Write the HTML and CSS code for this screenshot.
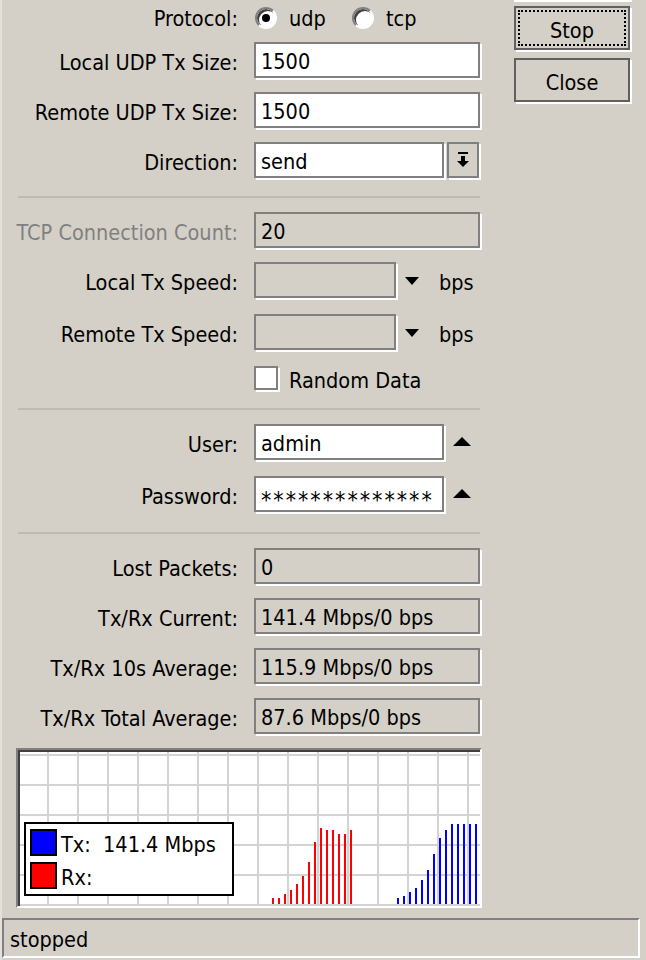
FILE: index.html
```html
<!DOCTYPE html>
<html lang="en">
<head>
  <meta charset="UTF-8" />
  <title>Bandwidth Test</title>
  <link rel="stylesheet" href="styles.css">
</head>
<body>
  <div class="window">
    <div class="main">
      <div class="form">
        <div class="row row-top">
          <div class="label">Protocol:</div>
          <div class="control">
            <span class="radio-opt"><span class="radio checked"></span><span class="opt-text">udp</span></span>
            <span class="radio-opt"><span class="radio"></span><span class="opt-text">tcp</span></span>
          </div>
        </div>
        <div class="row mt-6">
          <div class="label">Local UDP Tx Size:</div>
          <div class="control"><div class="box">1500</div></div>
        </div>
        <div class="row mt-14">
          <div class="label">Remote UDP Tx Size:</div>
          <div class="control"><div class="box">1500</div></div>
        </div>
        <div class="row mt-14">
          <div class="label">Direction:</div>
          <div class="control">
            <div class="box short">send</div>
            <div class="drop-btn">
              <svg width="14" height="16" viewBox="0 0 14 16"><rect x="2" y="0" width="10" height="2" fill="#000"/><rect x="5" y="4" width="4" height="5" fill="#000"/><polygon points="1,9 13,9 7,15" fill="#000"/></svg>
            </div>
          </div>
        </div>

        <div class="sep mt-18"></div>

        <div class="row mt-14">
          <div class="label disabled">TCP Connection Count:</div>
          <div class="control"><div class="box off">20</div></div>
        </div>
        <div class="row mt-14">
          <div class="label">Local Tx Speed:</div>
          <div class="control">
            <div class="box speed off"></div>
            <svg class="tri-down" width="14" height="8" viewBox="0 0 14 8"><polygon points="0,0 14,0 7,8" fill="#000"/></svg>
            <span class="unit">bps</span>
          </div>
        </div>
        <div class="row mt-16">
          <div class="label">Remote Tx Speed:</div>
          <div class="control">
            <div class="box speed off"></div>
            <svg class="tri-down" width="14" height="8" viewBox="0 0 14 8"><polygon points="0,0 14,0 7,8" fill="#000"/></svg>
            <span class="unit">bps</span>
          </div>
        </div>
        <div class="row mt-10">
          <div class="label"></div>
          <div class="control">
            <span class="check"></span>
            <span class="check-text">Random Data</span>
          </div>
        </div>

        <div class="sep mt-12"></div>

        <div class="row mt-14">
          <div class="label">User:</div>
          <div class="control">
            <div class="box short">admin</div>
            <svg class="tri-up" width="18" height="9" viewBox="0 0 18 9"><polygon points="0,9 18,9 9,0" fill="#000"/></svg>
          </div>
        </div>
        <div class="row mt-16">
          <div class="label">Password:</div>
          <div class="control">
            <div class="box short"><span class="stars">**************</span></div>
            <svg class="tri-up" width="18" height="9" viewBox="0 0 18 9"><polygon points="0,9 18,9 9,0" fill="#000"/></svg>
          </div>
        </div>

        <div class="sep mt-20"></div>

        <div class="row mt-14">
          <div class="label">Lost Packets:</div>
          <div class="control"><div class="box off">0</div></div>
        </div>
        <div class="row mt-14">
          <div class="label">Tx/Rx Current:</div>
          <div class="control"><div class="box off">141.4 Mbps/0 bps</div></div>
        </div>
        <div class="row mt-14">
          <div class="label">Tx/Rx 10s Average:</div>
          <div class="control"><div class="box off">115.9 Mbps/0 bps</div></div>
        </div>
        <div class="row mt-14">
          <div class="label">Tx/Rx Total Average:</div>
          <div class="control"><div class="box off">87.6 Mbps/0 bps</div></div>
        </div>
      </div>

      <div class="buttons">
        <div class="btn-edge"></div>
        <button class="btn btn-focus">Stop</button>
        <button class="btn">Close</button>
      </div>
    </div>

    <div class="graph">
      <svg width="462" height="156" viewBox="0 0 462 156">
        <rect width="462" height="156" fill="#fff"/>
        <g fill="#d3d3d3">
          <rect x="29" y="0" width="2" height="156"/><rect x="59" y="0" width="2" height="156"/>
          <rect x="89" y="0" width="2" height="156"/><rect x="119" y="0" width="2" height="156"/>
          <rect x="149" y="0" width="2" height="156"/><rect x="179" y="0" width="2" height="156"/>
          <rect x="209" y="0" width="2" height="156"/><rect x="239" y="0" width="2" height="156"/>
          <rect x="269" y="0" width="2" height="156"/><rect x="299" y="0" width="2" height="156"/>
          <rect x="329" y="0" width="2" height="156"/><rect x="359" y="0" width="2" height="156"/>
          <rect x="389" y="0" width="2" height="156"/><rect x="419" y="0" width="2" height="156"/>
          <rect x="449" y="0" width="2" height="156"/>
          <rect x="0" y="4" width="462" height="2"/><rect x="0" y="34" width="462" height="2"/>
          <rect x="0" y="64" width="462" height="2"/><rect x="0" y="94" width="462" height="2"/>
          <rect x="0" y="124" width="462" height="2"/><rect x="0" y="154" width="462" height="2"/>
        </g>
        <!-- rx -->
        <g fill="#ff0000">
          <rect x="254" y="148" width="2" height="6"/><rect x="260" y="148" width="2" height="6"/>
          <rect x="266" y="144" width="2" height="10"/><rect x="272" y="140" width="2" height="14"/>
          <rect x="278" y="134" width="2" height="20"/><rect x="284" y="126" width="2" height="28"/>
          <rect x="290" y="112" width="2" height="42"/><rect x="296" y="92" width="2" height="62"/>
          <rect x="302" y="78" width="2" height="76"/><rect x="308" y="80" width="2" height="74"/>
          <rect x="314" y="80" width="2" height="74"/><rect x="320" y="84" width="2" height="70"/>
          <rect x="326" y="84" width="2" height="70"/><rect x="332" y="80" width="2" height="74"/>
        </g>
        <!-- tx -->
        <g fill="#0000ff">
          <rect x="379" y="148" width="2" height="6"/><rect x="385" y="146" width="2" height="8"/>
          <rect x="391" y="142" width="2" height="12"/><rect x="397" y="138" width="2" height="16"/>
          <rect x="403" y="130" width="2" height="24"/><rect x="409" y="120" width="2" height="34"/>
          <rect x="415" y="104" width="2" height="50"/><rect x="421" y="88" width="2" height="66"/>
          <rect x="427" y="80" width="2" height="74"/><rect x="433" y="74" width="2" height="80"/>
          <rect x="439" y="74" width="2" height="80"/><rect x="445" y="74" width="2" height="80"/>
          <rect x="451" y="74" width="2" height="80"/><rect x="457" y="74" width="2" height="80"/>
        </g>
        <rect x="0" y="0" width="462" height="2" fill="#404040"/>
        <rect x="0" y="0" width="2" height="156" fill="#404040"/>
      </svg>
      <div class="legend">
        <div class="legend-row"><span class="swatch tx"></span><span class="legend-text">Tx:  141.4 Mbps</span></div>
        <div class="legend-row"><span class="swatch rx"></span><span class="legend-text">Rx:</span></div>
      </div>
    </div>

    <div class="status">stopped</div>
  </div>
</body>
</html>
```

FILE: styles.css
```css
* {
  margin: 0;
  padding: 0;
  box-sizing: border-box;
}

body {
  width: 646px;
  height: 960px;
  overflow: hidden;
  background: linear-gradient(to right, #e4e1db 2px, #d4d0c8 2px);
  font-family: "DejaVu Sans Condensed", "Liberation Sans", sans-serif;
  font-stretch: condensed;
  font-size: 21.5px;
  color: #000;
}

.main {
  display: flex;
  align-items: flex-start;
}

.form {
  width: 482px;
  display: flex;
  flex-direction: column;
}

.row {
  display: grid;
  grid-template-columns: 238px 1fr;
  column-gap: 16px;
  align-items: center;
  height: 36px;
}

.mt-6 { margin-top: 6px; }
.mt-10 { margin-top: 10px; }
.mt-12 { margin-top: 12px; }
.mt-14 { margin-top: 14px; }
.mt-16 { margin-top: 16px; }
.mt-18 { margin-top: 18px; }
.mt-20 { margin-top: 20px; }

/* text sits a little low in these old dialogs */
.label, .opt-text, .unit, .check-text, .legend-text {
  padding-top: 4px;
}

.row-top .label, .row-top .opt-text {
  padding-top: 1px;
}

.label {
  text-align: right;
  white-space: nowrap;
}

.label.disabled {
  color: #808080;
}

.control {
  display: flex;
  align-items: center;
  height: 36px;
}

.box {
  width: 226px;
  height: 36px;
  border: 2px solid #808080;
  box-shadow: 2px 2px 0 #fff;
  background: #fff;
  padding: 0 5px;
  line-height: 36px;
  white-space: nowrap;
  overflow: hidden;
}

.box.short { width: 190px; }
.box.speed { width: 142px; }
.box.off { background: #d4d0c8; }

.stars {
  font-size: 23px;
  letter-spacing: 2px;
  vertical-align: -5px;
}

.drop-btn {
  width: 32px;
  height: 36px;
  margin-left: 3px;
  border: 2px solid #808080;
  box-shadow: 2px 2px 0 #fff;
  background: #d4d0c8;
  display: flex;
  align-items: center;
  justify-content: center;
}

.tri-down {
  margin-left: 9px;
  margin-top: 1px;
}

.tri-up {
  margin-left: 9px;
  margin-top: -2px;
}

.unit {
  margin-left: 20px;
}

/* radio buttons */
.radio-opt {
  display: flex;
  align-items: center;
  width: 97px;
}

.radio {
  width: 22px;
  height: 22px;
  margin-left: 1px;
  margin-right: 12px;
  border-radius: 50%;
  border: 2px solid;
  border-color: #808080 #fff #fff #808080;
  box-shadow: inset 2px 2px 0 #404040;
  background: #fff;
  position: relative;
}

.radio.checked::after {
  content: "";
  position: absolute;
  left: 5px;
  top: 5px;
  width: 8px;
  height: 8px;
  border-radius: 50%;
  background: #000;
}

.check {
  width: 24px;
  height: 24px;
  border: 2px solid #808080;
  box-shadow: 2px 2px 0 #fff;
  background: #fff;
}

.check-text {
  margin-left: 11px;
}

.sep {
  height: 2px;
  width: 462px;
  margin-left: 18px;
  background: #bfbbb3;
}

/* right side buttons */
.buttons {
  margin-left: 32px;
  display: flex;
  flex-direction: column;
}

.btn-edge {
  width: 118px;
  height: 2px;
  background: #fff;
}

.btn {
  width: 116px;
  height: 44px;
  margin-top: 8px;
  padding-top: 4px;
  border: 2px solid #606060;
  box-shadow: 2px 2px 0 #fff;
  background: #d4d0c8;
  font: inherit;
  color: #000;
}

.btn-focus {
  margin-top: 4px;
  outline: 2px dotted #000;
  outline-offset: -6px;
}

/* graph */
.graph {
  position: relative;
  width: 466px;
  height: 160px;
  margin-top: 14px;
  margin-left: 16px;
  border: 2px solid;
  border-color: #808080 #fff #fff #808080;
}

.graph svg {
  display: block;
}

.legend {
  position: absolute;
  left: 6px;
  top: 72px;
  width: 210px;
  height: 74px;
  border: 2px solid #000;
  background: #fff;
  padding: 5px 0 0 4px;
  display: flex;
  flex-direction: column;
  gap: 6px;
}

.legend-row {
  display: flex;
  align-items: center;
  height: 27px;
}

.swatch {
  width: 27px;
  height: 27px;
  border: 2px solid #000;
}

.swatch.tx { background: #0000ff; }
.swatch.rx { background: #ff0000; }

.legend-text {
  margin-left: 4px;
  white-space: pre;
}

.status {
  width: 638px;
  height: 40px;
  margin-top: 10px;
  margin-left: 2px;
  border: 2px solid;
  border-color: #808080 #fff #fff #808080;
  padding-left: 6px;
  line-height: 40px;
}
```
